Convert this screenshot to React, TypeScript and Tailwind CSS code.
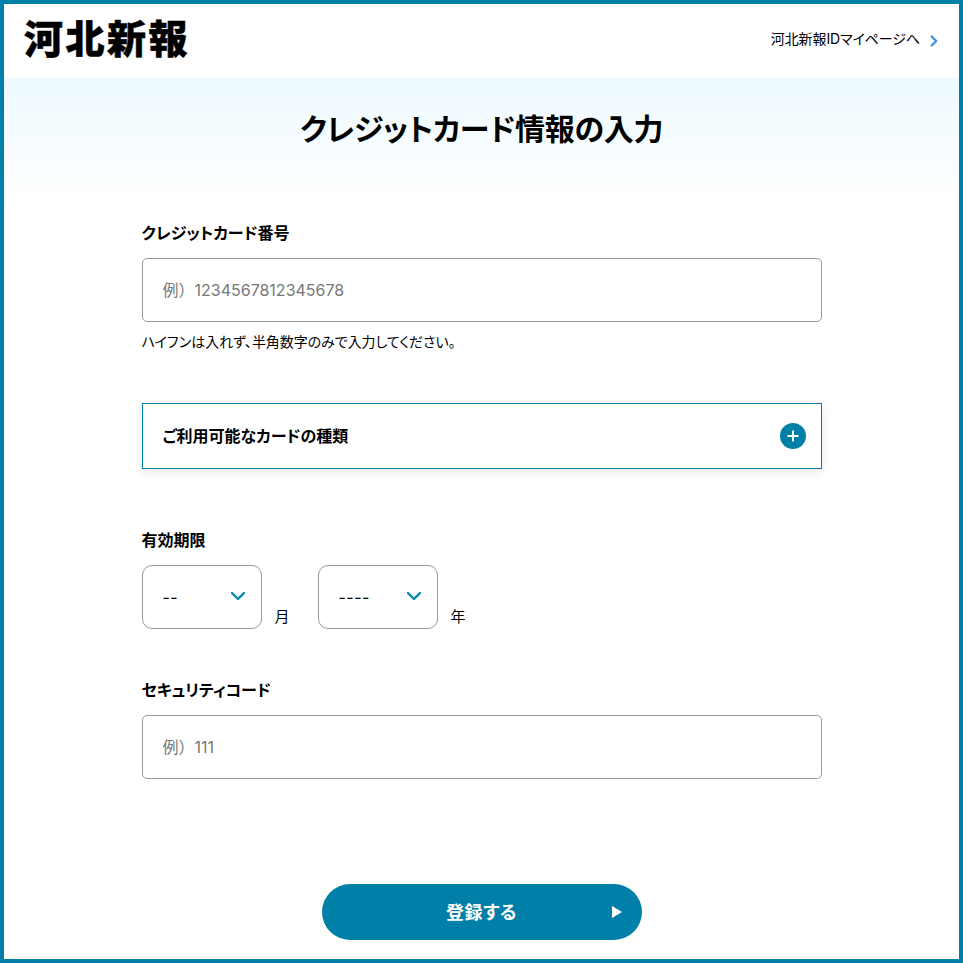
import { ChevronDown, ChevronRight, Plus } from "lucide-react";

const font = "font-['Inter','Noto_Sans_CJK_JP',sans-serif]";

function Label({ children }: { children: string }) {
  return <p className="text-[16px] leading-[20px] font-bold text-black">{children}</p>;
}

function TextInput({ placeholder }: { placeholder: string }) {
  return (
    <input
      readOnly
      placeholder={placeholder}
      className="mt-[15px] block h-16 w-full rounded-[5px] border border-[#999] bg-white px-5 text-[16px] [font-feature-settings:normal] placeholder:text-[#777] outline-none"
    />
  );
}

function DateSelect({ value, unit }: { value: string; unit: string }) {
  return (
    <div className="flex items-end">
      <div className="flex h-16 w-[120px] items-center justify-between rounded-[10px] border border-[#999] bg-white pr-[11px] pl-5">
        <span className="text-[16px] tracking-[0.5px] text-black">{value}</span>
        <ChevronDown size={24} strokeWidth={2.4} className="mb-[2px] text-[#0089ad]" />
      </div>
      <span className="mb-[1px] ml-[13px] w-[43px] text-[15px] leading-[22px] text-black">{unit}</span>
    </div>
  );
}

export default function App() {
  return (
    <div className={`${font} h-[963px] overflow-hidden border-4 border-[#007fa8] bg-white [font-feature-settings:'palt']`}>
      {/* Header */}
      <header className="flex h-[74px] items-center justify-between pr-4 pl-5">
        <span className="mb-[10px] text-[39px] leading-none font-black tracking-[2.5px] whitespace-nowrap text-black [-webkit-text-stroke:0.5px_black] font-['Noto_Sans_CJK_JP',sans-serif]">
          河北新報
        </span>
        <a className="flex items-center text-[14px] tracking-[-0.1px] text-black">
          <span className="mb-[6px]">河北新報IDマイページへ</span>
          <ChevronRight size={18} strokeWidth={3} className="ml-[5px] text-[#3a8fe0]" />
        </a>
      </header>

      {/* Form */}
      <main className="bg-gradient-to-b from-[#eefaff] to-white to-[130px]">
        <h1 className="pt-[30px] text-center text-[30px] leading-[42px] font-bold tracking-[-0.3px] text-black">
          クレジットカード情報の入力
        </h1>

        <div className="mx-auto w-[680px]">
          <div className="pt-[73px]">
            <Label>クレジットカード番号</Label>
            <TextInput placeholder="例）1234567812345678" />
            <p className="mt-[10px] text-[14px] leading-[20px] tracking-[-0.05px] text-black">
              ハイフンは入れず、半角数字のみで入力してください。
            </p>
          </div>

          <div className="mt-[51px] flex h-[66px] items-center justify-between border border-[#007fa8] bg-white pr-[15px] pl-5 shadow-[0_3px_10px_rgba(0,0,0,0.1)]">
            <span className="text-[16px] font-bold text-black">ご利用可能なカードの種類</span>
            <span className="flex h-[26px] w-[26px] items-center justify-center rounded-full bg-[#007fa8]">
              <Plus size={16} strokeWidth={3} className="text-white" />
            </span>
          </div>

          <div className="mt-[61px]">
            <Label>有効期限</Label>
            <div className="mt-[15px] flex">
              <DateSelect value="--" unit="月" />
              <DateSelect value="----" unit="年" />
            </div>
          </div>

          <div className="mt-[51px]">
            <Label>セキュリティコード</Label>
            <TextInput placeholder="例）111" />
          </div>

          <button className="relative mx-auto mt-[105px] flex h-14 w-80 items-center justify-center rounded-full bg-[#007fa8] text-[18px] font-bold tracking-[0.5px] text-white">
            登録する
            <span className="absolute top-[22px] right-5 h-0 w-0 border-y-[6px] border-l-[10px] border-y-transparent border-l-white" />
          </button>
        </div>
      </main>
    </div>
  );
}
